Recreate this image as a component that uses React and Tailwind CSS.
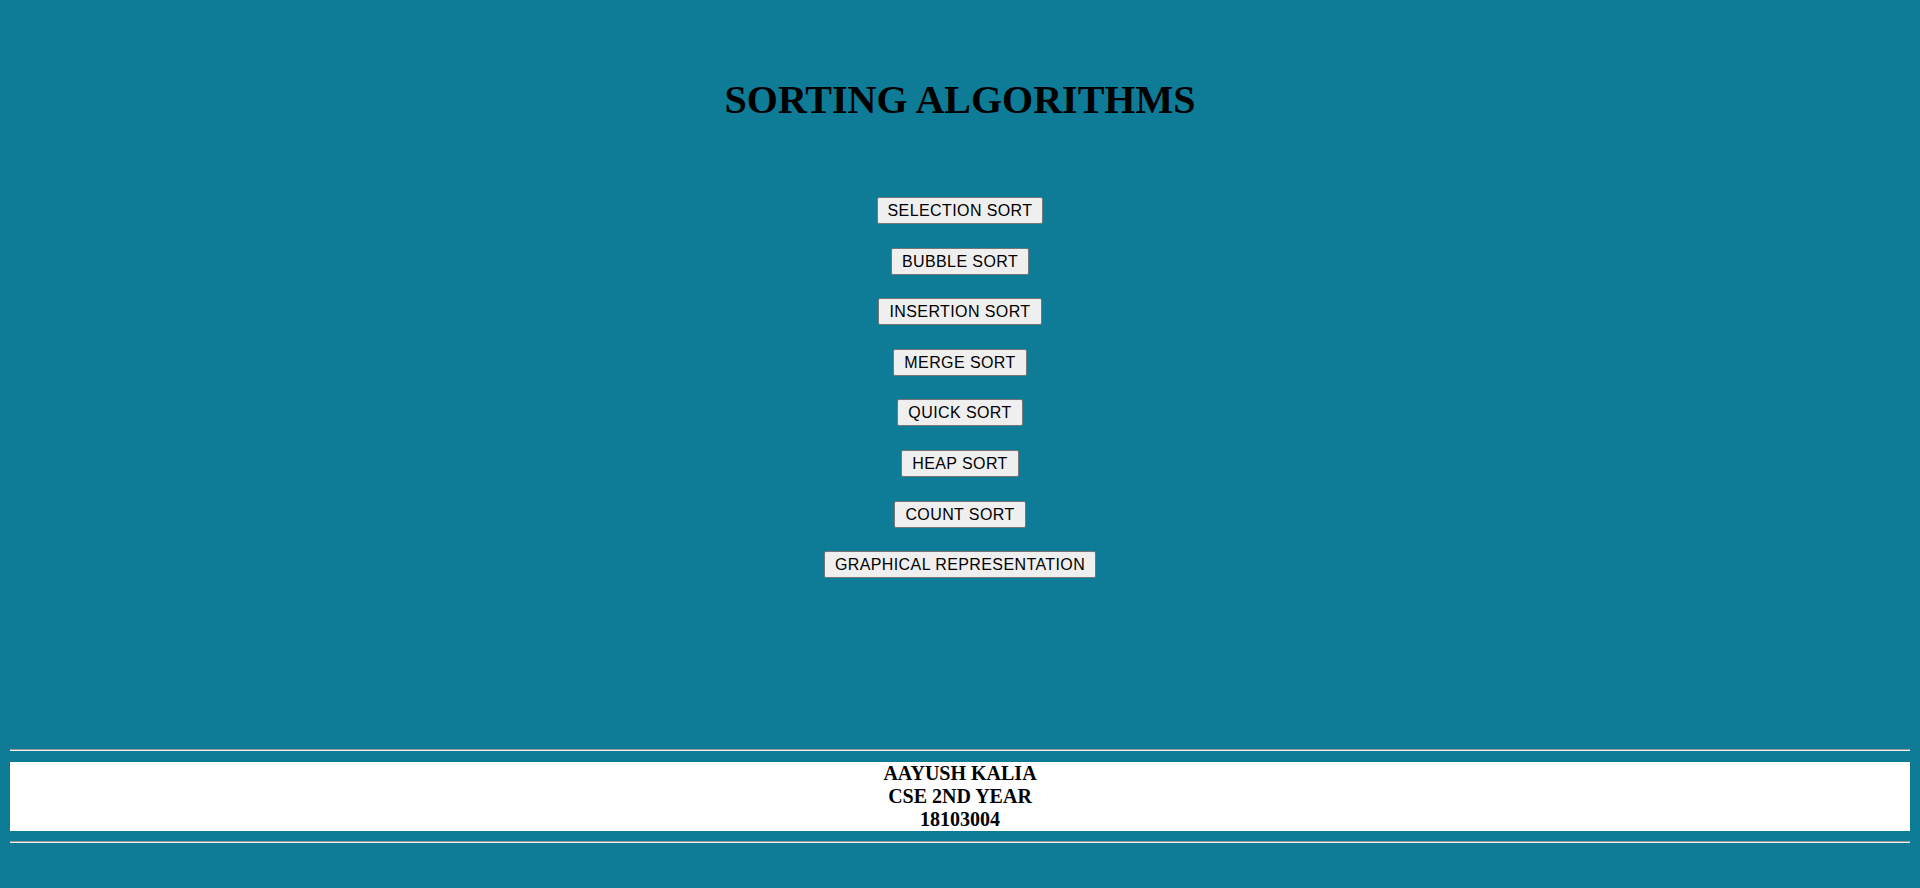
const sorts = [
  "SELECTION SORT",
  "BUBBLE SORT",
  "INSERTION SORT",
  "MERGE SORT",
  "QUICK SORT",
  "HEAP SORT",
  "COUNT SORT",
  "GRAPHICAL REPRESENTATION",
];

export default function App() {
  return (
    <div className="min-h-[888px] bg-[#0e7c96] px-[10px] pt-[77px] font-['Liberation_Serif',serif] text-black">
      <h1 className="text-center text-[40px] font-bold leading-[46px]">SORTING ALGORITHMS</h1>

      <div className="mt-[74px] flex flex-col items-center gap-[23.6px]">
        {sorts.map((name) => (
          <button
            key={name}
            className="rounded-[2px] border border-[#767676] bg-[#efefef] px-[10px] py-[3px] font-['Liberation_Sans',Arial,sans-serif] text-[16px] leading-[19px] tracking-[0.4px] text-black"
          >
            {name}
          </button>
        ))}
      </div>

      <footer className="mt-[171px]">
        <hr className="h-0 border-t border-b border-t-[#9a9a9a] border-b-[#f0f0f0]" />
        <div className="mt-[11px] bg-white text-center text-[20px] font-bold leading-[23px]">
          <div>AAYUSH KALIA</div>
          <div>CSE 2ND YEAR</div>
          <div>18103004</div>
        </div>
        <hr className="mt-[10px] h-0 border-t border-b border-t-[#9a9a9a] border-b-[#f0f0f0]" />
      </footer>
    </div>
  );
}
